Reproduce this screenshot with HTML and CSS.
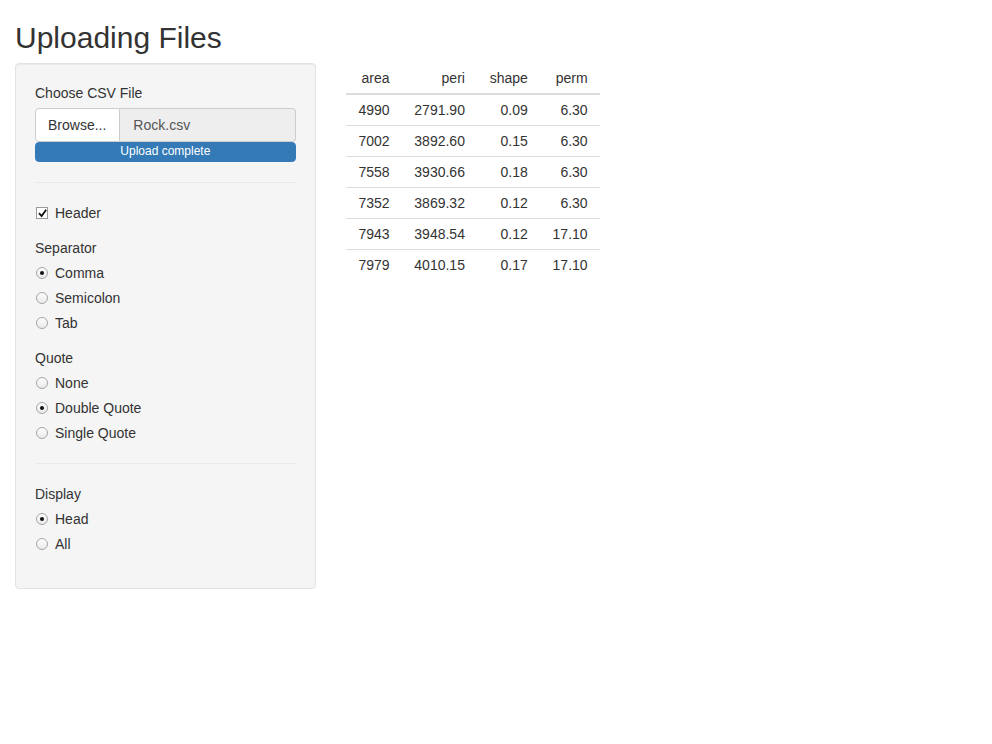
FILE: index.html
```html
<!DOCTYPE html>
<html>
<head>
<meta charset="utf-8">
<title>Uploading Files</title>
<link rel="stylesheet" href="styles.css">
</head>
<body>
<div class="container">
  <h2 class="title">Uploading Files</h2>
  <div class="row">
    <div class="side">
      <div class="well">
        <div class="group file-group">
          <div class="label">Choose CSV File</div>
          <div class="input-group">
            <span class="btn">Browse...</span>
            <span class="file-name">Rock.csv</span>
          </div>
          <div class="progress"><div class="bar">Upload complete</div></div>
        </div>
        <hr>
        <div class="group">
          <div class="option first"><span class="check"><svg width="9" height="9" viewBox="0 0 9 9"><path d="M1 4.2 L3.6 7 L8.2 0.8" fill="none" stroke="#111" stroke-width="1.8"/></svg></span>Header</div>
        </div>
        <div class="group">
          <div class="label">Separator</div>
          <div class="option"><span class="radio on"></span>Comma</div>
          <div class="option"><span class="radio"></span>Semicolon</div>
          <div class="option"><span class="radio"></span>Tab</div>
        </div>
        <div class="group">
          <div class="label">Quote</div>
          <div class="option"><span class="radio"></span>None</div>
          <div class="option"><span class="radio on"></span>Double Quote</div>
          <div class="option"><span class="radio"></span>Single Quote</div>
        </div>
        <hr>
        <div class="group">
          <div class="label">Display</div>
          <div class="option"><span class="radio on"></span>Head</div>
          <div class="option"><span class="radio"></span>All</div>
        </div>
      </div>
    </div>
    <div class="main">
      <table class="data">
        <thead>
          <tr><th>area</th><th>peri</th><th>shape</th><th>perm</th></tr>
        </thead>
        <tbody>
          <tr><td>4990</td><td>2791.90</td><td>0.09</td><td>6.30</td></tr>
          <tr><td>7002</td><td>3892.60</td><td>0.15</td><td>6.30</td></tr>
          <tr><td>7558</td><td>3930.66</td><td>0.18</td><td>6.30</td></tr>
          <tr><td>7352</td><td>3869.32</td><td>0.12</td><td>6.30</td></tr>
          <tr><td>7943</td><td>3948.54</td><td>0.12</td><td>17.10</td></tr>
          <tr><td>7979</td><td>4010.15</td><td>0.17</td><td>17.10</td></tr>
        </tbody>
      </table>
    </div>
  </div>
</div>
</body>
</html>
```

FILE: styles.css
```css
* { box-sizing: border-box; }
html, body {
  margin: 0;
  padding: 0;
  background: #fff;
  color: #333;
  font-family: "Liberation Sans", Arial, sans-serif;
  font-size: 14px;
  line-height: 20px;
}
.container {
  padding: 0 15px;
}
.title {
  margin: 21px 0 9px 0;
  font-size: 30px;
  font-weight: normal;
  line-height: 33px;
  color: #333;
}
.row {
  display: flex;
  margin: 0 -15px;
}
.side {
  width: 33.3333%;
  padding: 0 15px;
}
.main {
  width: 66.6667%;
  padding: 0 15px;
}
.well {
  background: #f5f5f5;
  border: 1px solid #e3e3e3;
  border-radius: 4px;
  box-shadow: inset 0 1px 1px rgba(0,0,0,0.05);
  padding: 19px;
  display: flow-root;
}
.group {
  margin-bottom: 15px;
}
.label {
  margin-bottom: 5px;
  line-height: 20px;
}
.input-group {
  display: flex;
  height: 34px;
}
.btn {
  display: block;
  background: #fff;
  border: 1px solid #ccc;
  border-radius: 4px 0 0 4px;
  padding: 6px 13px 6px 12px;
  color: #333;
  white-space: nowrap;
}
.file-name {
  flex: 1;
  display: block;
  background: #eee;
  border: 1px solid #ccc;
  border-left: 0;
  border-radius: 0 4px 4px 0;
  padding: 6px 13px;
  color: #555;
}
.progress {
  height: 20px;
  background: #f5f5f5;
  border-radius: 4px;
  overflow: hidden;
}
.bar {
  height: 20px;
  background: #337ab7;
  color: #fff;
  font-size: 12px;
  line-height: 19px;
  text-align: center;
  border-radius: 4px;
}
hr {
  margin: 20px 0;
  border: 0;
  border-top: 1px solid #e9e9e9;
}
.option {
  display: flex;
  align-items: center;
  height: 20px;
  margin-bottom: 5px;
}
.option:last-child { margin-bottom: 0; }
.option.first { margin-top: 0; }
.check {
  width: 12px;
  height: 12px;
  margin-left: 1px;
  margin-right: 7px;
  border: 1px solid #9a9a9a;
  background: #fff;
  display: flex;
  align-items: center;
  justify-content: center;
}
.check svg { display: block; }
.radio {
  width: 12px;
  height: 12px;
  margin-left: 1px;
  margin-right: 7px;
  border-radius: 50%;
  border: 1px solid #a6a6a6;
  background: linear-gradient(#fdfdfd, #eaeaea);
  display: flex;
  align-items: center;
  justify-content: center;
}
.radio.on::after {
  content: "";
  width: 4px;
  height: 4px;
  border-radius: 50%;
  background: #111;
}
.data {
  border-collapse: collapse;
  margin-bottom: 20px;
}
.data th, .data td {
  padding: 5px 12px 5px 12.75px;
  text-align: right;
  font-weight: normal;
  line-height: 20px;
  color: #333;
}
.data th {
  border-bottom: 2px solid #ddd;
}
.data tbody tr + tr td {
  border-top: 1px solid #ddd;
}
```
